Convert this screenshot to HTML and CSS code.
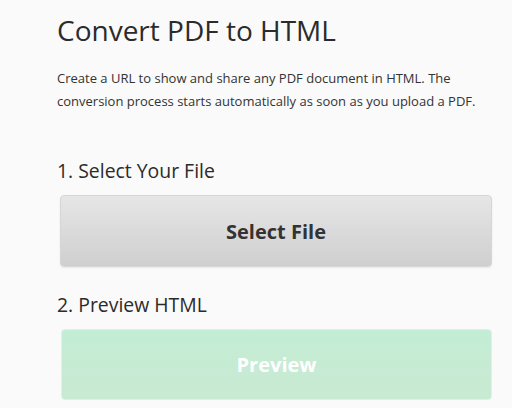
FILE: index.html
```html
<!DOCTYPE html>
<html lang="en">
<head>
    <meta charset="UTF-8">
    <meta name="viewport" content="width=device-width, initial-scale=1.0">
    <title>Convert PDF to HTML</title>
    <link rel="stylesheet" href="styles.css">
</head>
<body>

    <div id="converter">
        <h1 class="title">Convert PDF to HTML</h1>
        <p class="intro">Create a URL to show and share any PDF document in HTML. The conversion process starts automatically as soon as you upload a PDF.</p>

        <div class="step">
            <h2 class="step-title">1. Select Your File</h2>
            <button class="btn btn-select">Select File</button>
        </div>

        <div class="step">
            <h2 class="step-title">2. Preview HTML</h2>
            <button class="btn btn-preview" disabled>Preview</button>
        </div>
    </div>

</body>
</html>
```

FILE: styles.css
```css
body, html {
    margin: 0;
    padding: 0;
    width: 100%;
    height: 100%;
    background-color: #fafafa;
    font-family: 'Open Sans', 'Noto Sans', sans-serif;
    color: #333;
    overflow: hidden;
}

#converter {
    padding: 10px 20px 0 57px;
}

.title {
    margin: 0;
    font-size: 28px;
    font-weight: 400;
    line-height: 40px;
    color: #2b2b2b;
}

.intro {
    margin: 17px 0 0;
    font-size: 13px;
    line-height: 23px;
    color: #333;
}

.step { margin-top: 45px; }
.step + .step { margin-top: 25px; }

.step-title {
    margin: 0 0 11px;
    font-size: 19.4px;
    font-weight: 400;
    line-height: 26px;
    color: #2b2b2b;
}

.btn {
    display: block;
    width: 432px;
    height: 72px;
    margin-left: 3px;
    border-radius: 4px;
    font-family: inherit;
    font-size: 20px;
    font-weight: 700;
    cursor: pointer;
}

.btn-select {
    background: linear-gradient(#e6e6e6, #cfcfcf);
    border: 1px solid #d6d6d6;
    box-shadow: 0 1px 2px rgba(0,0,0,0.08);
    color: #333;
}

.btn-preview {
    width: 431px;
    margin-left: 4px;
    height: 71px;
    background: linear-gradient(#c3edd5, #c9e9d2);
    border: 1px solid #ddf1e4;
    color: #fff;
    cursor: default;
}
```
